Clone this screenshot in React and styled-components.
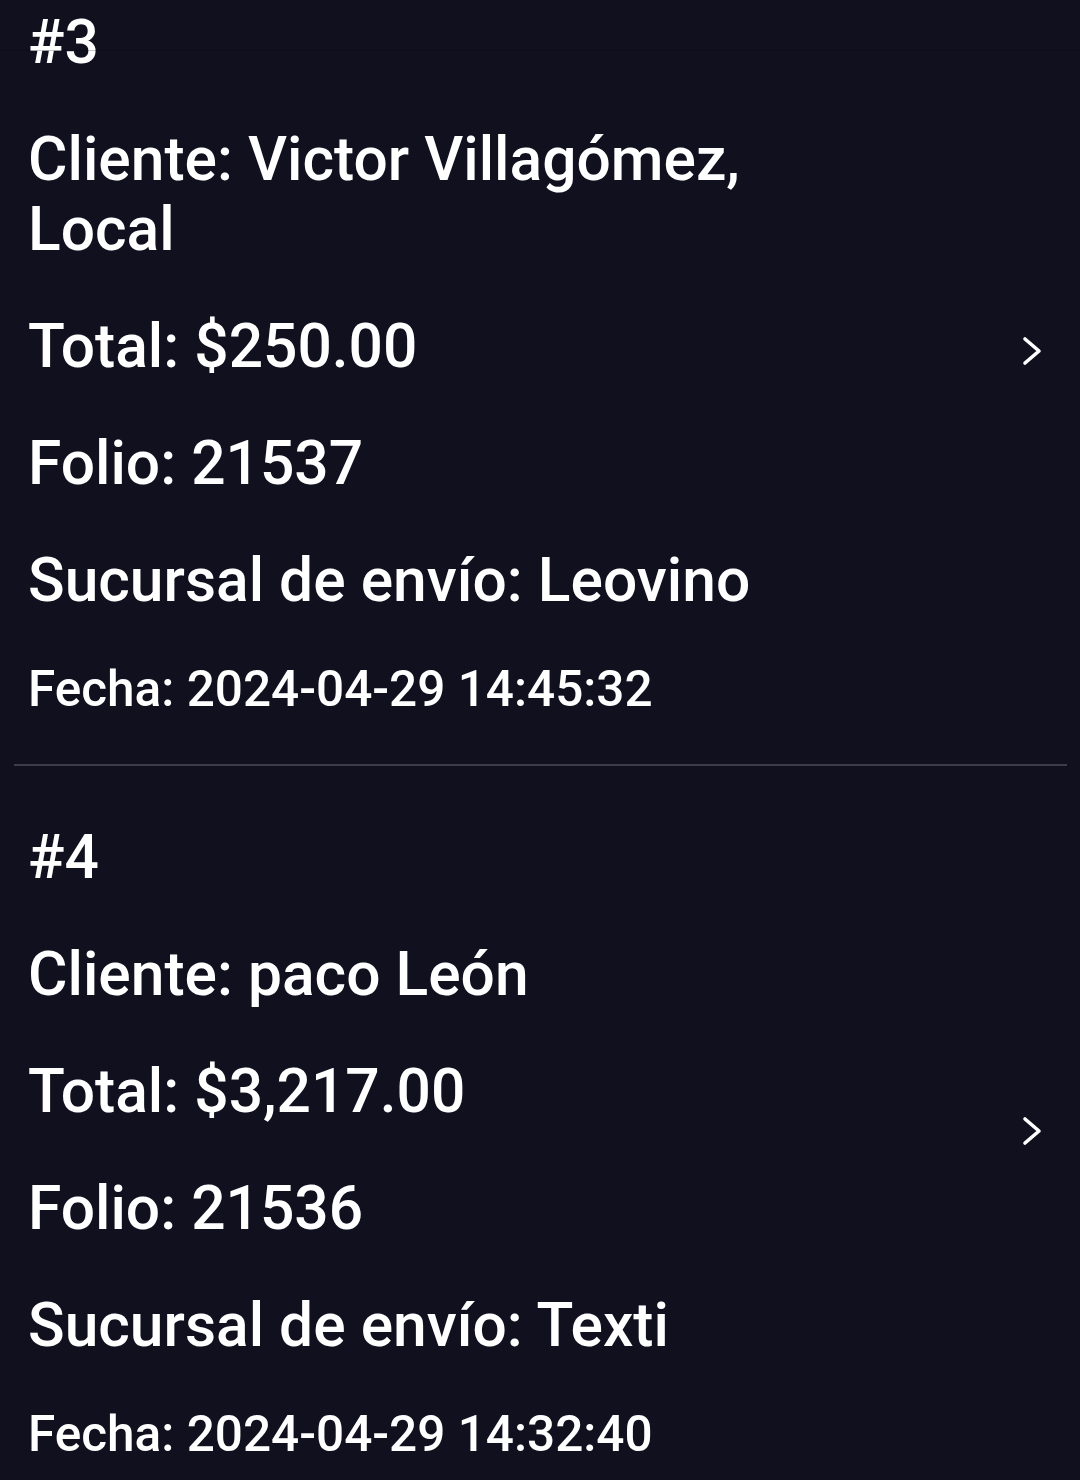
import React from "react";
import styled, { createGlobalStyle } from "styled-components";

const Global = createGlobalStyle`
  html, body { margin: 0; padding: 0; background: #11101f; }
  body { font-family: Roboto, "Noto Sans", "Liberation Sans", sans-serif; color: #ffffff; }
`;

const Screen = styled.div`
  position: relative;
  width: 1080px;
  min-height: 1480px;
  background: #11101f;
  overflow: hidden;
`;

const HeaderEdge = styled.div`
  position: absolute;
  left: 0;
  right: 0;
  top: 50px;
  height: 1px;
  background: rgba(0, 0, 0, 0.22);
`;

const List = styled.div`
  display: flex;
  flex-direction: column;
`;

const Item = styled.div`
  display: flex;
  align-items: center;
  padding: ${(p) => (p.$first ? "8px" : "57px")} 36px 47px 28px;
`;

const Divider = styled.div`
  height: 2px;
  margin: 0 13px 0 14px;
  background: #3c3b4a;
`;

const Info = styled.div`
  flex: 1;
  display: flex;
  flex-direction: column;
  gap: 47px;
`;

const Line = styled.div`
  max-width: 860px;
  font-size: 60.5px;
  line-height: 70px;
  font-weight: 500;
`;

const DateLine = styled.div`
  font-size: 49.5px;
  line-height: 56px;
  font-weight: 500;
  margin-top: -2px;
`;

const Chevron = styled.svg`
  flex: none;
  margin-bottom: 23px;
`;

const orders = [
  {
    n: 3,
    cliente: "Victor Villagómez, Local",
    total: "$250.00",
    folio: "21537",
    sucursal: "Leovino",
    fecha: "2024-04-29 14:45:32",
  },
  {
    n: 4,
    cliente: "paco León",
    total: "$3,217.00",
    folio: "21536",
    sucursal: "Texti",
    fecha: "2024-04-29 14:32:40",
  },
];

export default function App() {
  return (
    <Screen>
      <Global />
      <List>
        {orders.map((o, i) => (
          <React.Fragment key={o.n}>
            {i > 0 && <Divider />}
            <Item $first={i === 0}>
              <Info>
                <Line>#{o.n}</Line>
                <Line>Cliente: {o.cliente}</Line>
                <Line>Total: {o.total}</Line>
                <Line>Folio: {o.folio}</Line>
                <Line>Sucursal de envío: {o.sucursal}</Line>
                <DateLine>Fecha: {o.fecha}</DateLine>
              </Info>
              <Chevron width="24" height="32" viewBox="0 0 24 32">
                <polyline
                  points="5,4 19,16 5,28"
                  fill="none"
                  stroke="#ffffff"
                  strokeWidth="3.6"
                  strokeLinecap="round"
                  strokeLinejoin="round"
                />
              </Chevron>
            </Item>
          </React.Fragment>
        ))}
      </List>
      <HeaderEdge />
    </Screen>
  );
}
